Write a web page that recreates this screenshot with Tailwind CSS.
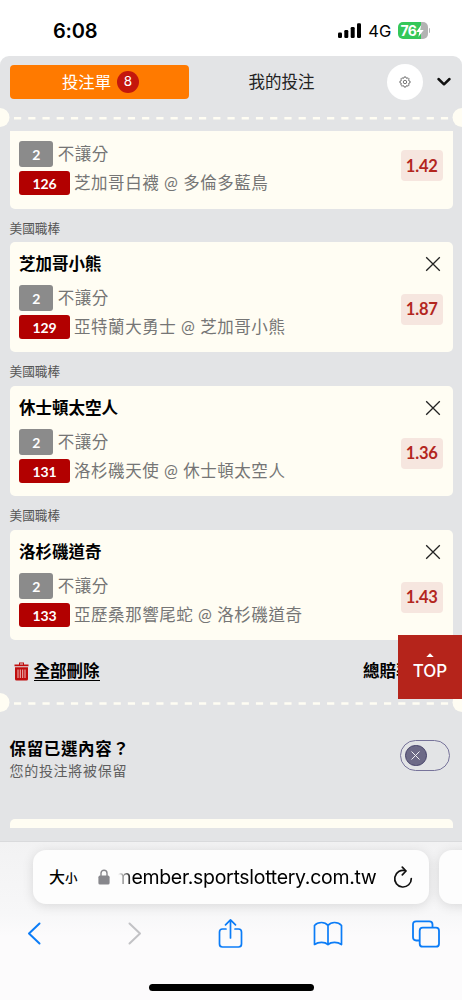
<!DOCTYPE html>
<html lang="zh-Hant">
<head>
<meta charset="utf-8">
<meta name="viewport" content="width=device-width, initial-scale=1">
<title>投注單</title>
<script src="https://cdn.jsdelivr.net/npm/@tailwindcss/browser@4"></script>
</head>
<body class="w-[462px] h-[1000px] overflow-hidden bg-white font-['Lato','Noto_Sans_CJK_TC',sans-serif] text-black whitespace-nowrap">
<div class="relative flex flex-col h-[1000px] w-[462px] overflow-hidden">

  <!-- Status bar -->
  <header class="h-14 shrink-0 flex items-center pl-[53px] pr-[32px] pt-[5px] font-['Inter',sans-serif]">
    <span class="text-[20px] font-semibold leading-6 tracking-[-0.2px]">6:08</span>
    <svg class="ml-auto" width="24" height="15" viewBox="0 0 24 15"><rect x="0" y="9.500" width="4" height="5.500" rx="1.200"/><rect x="6.300" y="7" width="4" height="8" rx="1.200"/><rect x="12.700" y="4" width="4" height="11" rx="1.200"/><rect x="19" y="0.300" width="4" height="14.700" rx="1.200"/></svg>
    <span class="ml-[6px] text-[16.500px] leading-6 tracking-[0.2px]">4G</span>
    <div class="ml-[6px] flex items-center gap-px">
      <div class="relative h-[17px] w-[30px] rounded-[5px] overflow-hidden bg-[linear-gradient(90deg,#34c759_76%,#b3b3b3_76%)] flex items-center pl-[3px] text-white">
        <span class="text-[14px] font-bold leading-none tracking-[-0.7px]">76</span>
        <svg class="shrink-0" width="8" height="12" viewBox="0 0 8 12"><path d="M5.200 0 0.300 6.900H3.300L2.400 12 7.700 4.900H4.500Z" fill="#fff"/></svg>
      </div>
      <div class="h-[5px] w-[1.500px] rounded-r bg-[#b3b3b3]"></div>
    </div>
  </header>

  <main class="h-[785px] shrink-0 bg-[#e3e4e6] rounded-t-[9px] flex flex-col">
    <!-- Tabs -->
    <div class="flex items-center h-[52px] shrink-0 pl-[9.500px]">
      <div class="w-[179.500px] h-[33.500px] rounded-[4px] bg-[#ff7a00] flex items-center justify-center gap-[6px] pl-[2px] text-white text-[16.400px]">
        <span>投注單</span>
        <span class="size-[21.500px] rounded-full bg-[#c4170c] flex items-center justify-center text-[13.500px] font-['Inter',sans-serif] leading-none">8</span>
      </div>
      <div class="w-[185px] text-center text-[16.500px] text-[#222]">我的投注</div>
      <div class="ml-[13px] size-[36px] rounded-full bg-white flex items-center justify-center">
        <svg width="12" height="12" viewBox="0 0 12 12" fill="none" stroke="#555" stroke-width="0.800" stroke-linejoin="round"><path d="M5 2 5.200.9H6.800L7 2 8.100 2.400 9 1.700 10.200 2.900 9.600 3.900 10 5 11.100 5.200V6.800L10 7 9.600 8.100 10.200 9 9 10.300 8.100 9.600 7 10 6.800 11.100H5.200L5 10 3.900 9.600 3 10.300 1.700 9 2.400 8.100 2 7 .9 6.800V5.200L2 5 2.400 3.900 1.700 3 3 1.700 3.900 2.400Z"/><circle cx="6" cy="6" r="1.700"/></svg>
      </div>
      <svg class="ml-[13px]" width="16" height="10" viewBox="0 0 16 10" fill="none" stroke="#111" stroke-width="2.500" stroke-linecap="round" stroke-linejoin="round"><path d="M2.500 2 8 7.300 13.500 2"/></svg>
    </div>

    <!-- Perforation -->
    <svg class="shrink-0" width="462" height="20" viewBox="0 0 462 20"><circle cx="0" cy="9.500" r="9.500" fill="#fffdf3"/><circle cx="462" cy="9.500" r="9.500" fill="#fffdf3"/><path d="M14 10.200H449" stroke="#fffdf3" stroke-width="2.600" stroke-dasharray="7.200 7.030"/></svg>

    <!-- Selections -->
    <section class="flex flex-col px-[9.500px] pt-[3.400px] text-[#757575] shrink-0">
      <article class="h-[77.500px] bg-[#fffdf3] rounded-b-[5px] flex justify-between pl-[9.500px] pr-[9.500px] pt-[10px]">
        <div>
          <div class="flex items-center h-[26px] gap-[4.500px] text-[16.500px] tracking-[0.550px]"><span class="w-[34.200px] h-[26px] rounded-[3px] bg-[#8b8b8b] text-white font-bold text-[14px] tracking-[-0.2px] flex items-center justify-center">2</span><span>不讓分</span></div>
          <div class="flex items-center mt-[4px] h-[24px] gap-[4px] text-[16.500px] tracking-[0.550px]"><span class="w-[51px] h-[24px] rounded-[3px] bg-[#b20000] text-white font-bold text-[14px] tracking-[-0.2px] flex items-center justify-center">126</span><span>芝加哥白襪 @ 多倫多藍鳥</span></div>
        </div>
        <span class="mt-[9px] w-[42.500px] h-[31px] rounded-[4px] bg-[#f6e6df] text-[#b3261e] font-bold text-[16.500px] tracking-[-0.2px] flex items-center justify-center">1.42</span>
      </article>

      <h3 class="h-[33.600px] flex items-center pt-[5px] text-[12.700px] text-[#555]">美國職棒</h3>
      <article class="h-[110px] bg-[#fffdf3] rounded-[5px] flex justify-between pl-[9.500px] pr-[9.500px]">
        <div>
          <h4 class="h-[43px] flex items-center pt-[1px] text-[16.500px] font-bold text-black">芝加哥小熊</h4>
          <div class="flex items-center h-[26px] gap-[4.500px] text-[16.500px] tracking-[0.550px]"><span class="w-[34.200px] h-[26px] rounded-[3px] bg-[#8b8b8b] text-white font-bold text-[14px] tracking-[-0.2px] flex items-center justify-center">2</span><span>不讓分</span></div>
          <div class="flex items-center mt-[4px] h-[24px] gap-[4px] text-[16.500px] tracking-[0.550px]"><span class="w-[51px] h-[24px] rounded-[3px] bg-[#b20000] text-white font-bold text-[14px] tracking-[-0.2px] flex items-center justify-center">129</span><span>亞特蘭大勇士 @ 芝加哥小熊</span></div>
        </div>
        <div class="flex flex-col items-end pt-[13.500px]">
          <svg class="mr-[2px]" width="16" height="16" viewBox="0 0 16 16" stroke="#222" stroke-width="1.300"><path d="M1.200 1.200 14.800 14.800M14.800 1.200 1.200 14.800"/></svg>
          <span class="mt-[22px] w-[42.500px] h-[31px] rounded-[4px] bg-[#f6e6df] text-[#b3261e] font-bold text-[16.500px] tracking-[-0.2px] flex items-center justify-center">1.87</span>
        </div>
      </article>

      <h3 class="h-[33.900px] flex items-center pt-[5px] text-[12.700px] text-[#555]">美國職棒</h3>
      <article class="h-[110px] bg-[#fffdf3] rounded-[5px] flex justify-between pl-[9.500px] pr-[9.500px]">
        <div>
          <h4 class="h-[43px] flex items-center pt-[1px] text-[16.500px] font-bold text-black">休士頓太空人</h4>
          <div class="flex items-center h-[26px] gap-[4.500px] text-[16.500px] tracking-[0.550px]"><span class="w-[34.200px] h-[26px] rounded-[3px] bg-[#8b8b8b] text-white font-bold text-[14px] tracking-[-0.2px] flex items-center justify-center">2</span><span>不讓分</span></div>
          <div class="flex items-center mt-[4px] h-[24px] gap-[4px] text-[16.500px] tracking-[0.550px]"><span class="w-[51px] h-[24px] rounded-[3px] bg-[#b20000] text-white font-bold text-[14px] tracking-[-0.2px] flex items-center justify-center">131</span><span>洛杉磯天使 @ 休士頓太空人</span></div>
        </div>
        <div class="flex flex-col items-end pt-[13.500px]">
          <svg class="mr-[2px]" width="16" height="16" viewBox="0 0 16 16" stroke="#222" stroke-width="1.300"><path d="M1.200 1.200 14.800 14.800M14.800 1.200 1.200 14.800"/></svg>
          <span class="mt-[22px] w-[42.500px] h-[31px] rounded-[4px] bg-[#f6e6df] text-[#b3261e] font-bold text-[16.500px] tracking-[-0.2px] flex items-center justify-center">1.36</span>
        </div>
      </article>

      <h3 class="h-[33.800px] flex items-center pt-[5px] text-[12.700px] text-[#555]">美國職棒</h3>
      <article class="h-[110px] bg-[#fffdf3] rounded-[5px] flex justify-between pl-[9.500px] pr-[9.500px]">
        <div>
          <h4 class="h-[43px] flex items-center pt-[1px] text-[16.500px] font-bold text-black">洛杉磯道奇</h4>
          <div class="flex items-center h-[26px] gap-[4.500px] text-[16.500px] tracking-[0.550px]"><span class="w-[34.200px] h-[26px] rounded-[3px] bg-[#8b8b8b] text-white font-bold text-[14px] tracking-[-0.2px] flex items-center justify-center">2</span><span>不讓分</span></div>
          <div class="flex items-center mt-[4px] h-[24px] gap-[4px] text-[16.500px] tracking-[0.550px]"><span class="w-[51px] h-[24px] rounded-[3px] bg-[#b20000] text-white font-bold text-[14px] tracking-[-0.2px] flex items-center justify-center">133</span><span>亞歷桑那響尾蛇 @ 洛杉磯道奇</span></div>
        </div>
        <div class="flex flex-col items-end pt-[13.500px]">
          <svg class="mr-[2px]" width="16" height="16" viewBox="0 0 16 16" stroke="#222" stroke-width="1.300"><path d="M1.200 1.200 14.800 14.800M14.800 1.200 1.200 14.800"/></svg>
          <span class="mt-[22px] w-[42.500px] h-[31px] rounded-[4px] bg-[#f6e6df] text-[#b3261e] font-bold text-[16.500px] tracking-[-0.2px] flex items-center justify-center">1.43</span>
        </div>
      </article>
    </section>

    <!-- Delete all and total odds -->
    <div class="flex items-center h-[53.300px] shrink-0 pl-[14px] pt-[9.500px] text-[16.500px] font-bold">
      <svg width="15" height="19" viewBox="0 0 15 19"><path d="M5 0.500H10V2.500H14.500V4.300H0.500V2.500H5ZM6 1.500V2.500H9V1.500Z" fill="#c00d0d" fill-rule="evenodd"/><path d="M1 5.300H14V17Q14 18.500 12.500 18.500H2.500Q1 18.500 1 17Z" fill="#c00d0d"/><path d="M4 7.500V16M6.300 7.500V16M8.700 7.500V16M11 7.500V16" stroke="#f3d3d0" stroke-width="0.900"/></svg>
      <span class="ml-[4.500px] leading-[18px] border-b-[1.500px] border-black">全部刪除</span>
      <span class="ml-[263.500px]">總賠率</span>
    </div>

    <svg class="shrink-0" width="462" height="20" viewBox="0 0 462 20"><circle cx="0" cy="9.500" r="9.500" fill="#fffdf3"/><circle cx="462" cy="9.500" r="9.500" fill="#fffdf3"/><path d="M14 10.500H449" stroke="#fffdf3" stroke-width="2.600" stroke-dasharray="7.200 7.030"/></svg>

    <!-- Keep selections toggle -->
    <div class="flex items-start justify-between h-[105.500px] shrink-0 pl-[9.500px] pr-[12px] pt-[26.500px]">
      <div class="flex flex-col">
        <span class="mt-[-1.500px] text-[16.500px] leading-[22px] font-bold tracking-[0.650px]">保留已選內容？</span>
        <span class="text-[14px] leading-[22px] tracking-[0.7px] text-[#5e5e5e]">您的投注將被保留</span>
      </div>
      <div class="w-[50px] h-[31px] rounded-full border border-[#77739a] flex items-center pl-[4px]">
        <div class="size-[21.500px] rounded-full bg-[#6d6a87] border border-[#454168] flex items-center justify-center">
          <svg width="9" height="9" viewBox="0 0 9 9" stroke="#f0f0f4" stroke-width="1"><path d="M.5.5 8.500 8.500M8.500.5.5 8.500"/></svg>
        </div>
      </div>
    </div>
    <div class="mx-[9.500px] h-[9px] shrink-0 rounded-t-[5px] bg-[#fffdf3]"></div>
  </main>

  <!-- Browser chrome -->
  <footer class="flex-1 flex flex-col bg-[linear-gradient(#f2f2f3,#f7f7f8_45%,#fcfbfc_60%)] border-t border-[#d9dadc]">
    <div class="flex gap-[9.500px] pl-[33px] pt-[8px]">
      <div class="w-[396px] h-[54px] shrink-0 rounded-[13px] bg-[#fdfdfd] shadow-[0_2px_12px_rgba(0,0,0,0.12)] flex items-center pl-[16px] pr-[16px]">
        <span class="flex items-baseline font-medium"><span class="text-[16px]">大</span><span class="text-[12.500px]">小</span></span>
        <svg class="ml-[20px] shrink-0" width="12" height="16" viewBox="0 0 12 16"><path d="M3 7V4.200a3 3 0 0 1 6 0V7" fill="none" stroke="#87878c" stroke-width="1.400"/><rect x=".4" y="6.600" width="11.200" height="9" rx="1.600" fill="#87878c"/></svg>
        <div class="ml-[8px] w-[259px] overflow-hidden flex justify-end font-['Inter',sans-serif] text-[19.500px] tracking-[-0.3px] leading-7 [mask-image:linear-gradient(90deg,transparent,#000_14px)]"><span>member.sportslottery.com.tw</span></div>
        <svg class="ml-auto shrink-0" width="20" height="23" viewBox="0 0 20 23" fill="none" stroke="#111" stroke-width="1.700" stroke-linecap="round" stroke-linejoin="round"><path d="M12.500 4.800A8.300 8.300 0 1 0 18.300 12.500"/><path d="M9.300 1.200 13 5 9.300 8.800"/></svg>
      </div>
      <div class="w-[60px] h-[54px] shrink-0 rounded-[13px] bg-[#fdfdfd] shadow-[0_2px_12px_rgba(0,0,0,0.12)]"></div>
    </div>
    <nav class="flex items-center h-[59px] pl-[27px]">
      <svg width="14" height="23" viewBox="0 0 14 23" fill="none" stroke="#0b7cf7" stroke-width="2" stroke-linecap="round" stroke-linejoin="round"><path d="M12.500 1.500 2 11.500 12.500 21.500"/></svg>
      <svg class="ml-[87px]" width="14" height="23" viewBox="0 0 14 23" fill="none" stroke="#c2c2c5" stroke-width="2" stroke-linecap="round" stroke-linejoin="round"><path d="M1.500 1.500 12 11.500 1.500 21.500"/></svg>
      <svg class="ml-[76px]" width="25" height="31" viewBox="0 0 25 31" fill="none" stroke="#0b7cf7" stroke-width="1.700" stroke-linecap="round" stroke-linejoin="round"><path d="M8 11H4.500Q1.500 11 1.500 14V26Q1.500 29 4.500 29H20.500Q23.500 29 23.500 26V14Q23.500 11 20.500 11H17M12.500 20V2M7.500 6.800 12.500 1.800 17.500 6.800"/></svg>
      <svg class="ml-[70px]" width="30" height="25" viewBox="0 0 30 25" fill="none" stroke="#0b7cf7" stroke-width="1.700" stroke-linecap="round" stroke-linejoin="round"><path d="M15 4.500Q12.500 1.500 8.500 1.500Q4 1.500 1.500 4.500V23.500Q4.500 21.300 8.500 21.300Q12.500 21.300 15 23.500Q17.500 21.300 21.500 21.300Q25.500 21.300 28.500 23.500V4.500Q26 1.500 21.500 1.500Q17.500 1.500 15 4.500V23.500"/></svg>
      <svg class="ml-[69px]" width="28" height="28" viewBox="0 0 28 28" fill="none" stroke="#0b7cf7" stroke-width="1.800" stroke-linejoin="round"><rect x="7.700" y="7.700" width="19.300" height="19" rx="3"/><path d="M7.700 20.500H4.200Q1 20.500 1 17.300V4.500Q1 1.300 4.200 1.300H17.300Q20.500 1.300 20.500 4.500V7.700"/></svg>
    </nav>
    <div class="mt-auto mb-[9.500px] mx-auto w-[165px] h-[6.500px] rounded-full bg-black"></div>
  </footer>

  <!-- Back to top -->
  <button class="absolute left-[398px] top-[635px] size-[64px] bg-[#b5241b] text-white flex flex-col items-center pt-[18px] font-['Inter',sans-serif]">
    <svg width="8" height="4" viewBox="0 0 8 4"><path d="M.3 4 4 .2 7.700 4Z" fill="#fff"/></svg>
    <span class="mt-[3px] text-[17px] leading-[22px] font-medium">TOP</span>
  </button>
</div>
</body>
</html>
